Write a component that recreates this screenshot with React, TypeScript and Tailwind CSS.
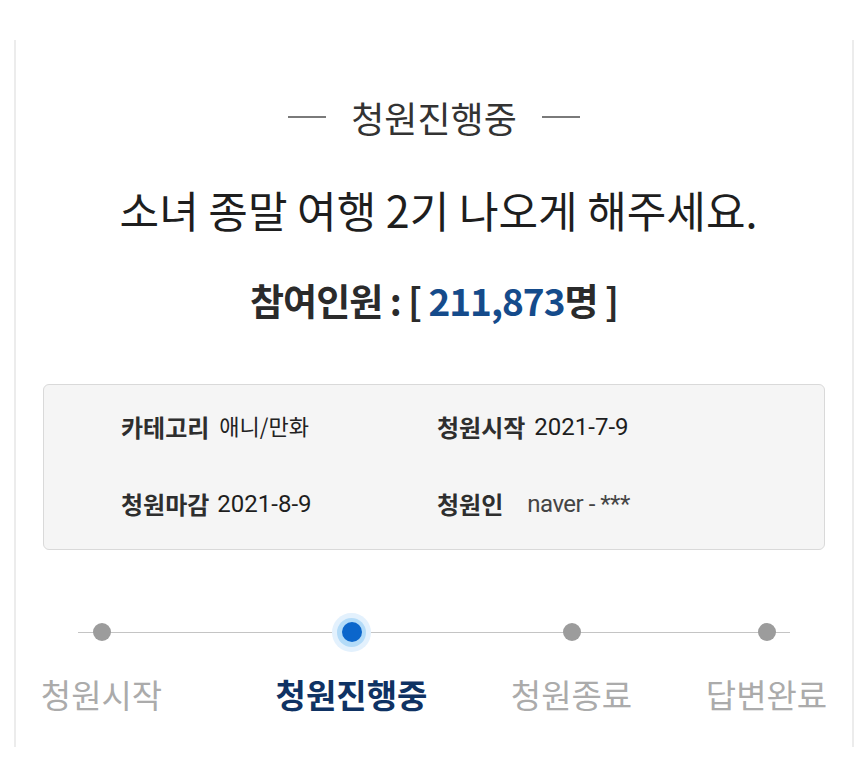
export default function App() {
  const font = "font-['Noto_Sans_CJK_KR','Noto_Sans',sans-serif]";

  return (
    <div className={`w-[866px] h-[776px] overflow-hidden bg-white ${font}`}>
      <div className="ml-[14px] mt-[40px] w-[840px] h-[707px] border-x-2 border-[#ececec] flex flex-col items-center">
        {/* status heading */}
        <div className="mt-[57px] flex items-center h-[40px]">
          <span className="block w-[38px] h-[2px] bg-[#7a7a7a]" />
          <span className="mx-[25px] text-[36px] leading-[40px] text-[#333]">청원진행중</span>
          <span className="block w-[38px] h-[2px] bg-[#7a7a7a]" />
        </div>

        <h1 className="mt-[48px] ml-[9px] text-[43px] leading-[48px] text-[#1e1e1e]">
          소녀 종말 여행 2기 나오게 해주세요.
        </h1>

        <p className="mt-[45px] text-[37px] leading-[44px] font-bold text-[#2b2b2b] tracking-[-1px]">
          참여인원 : [ <span className="text-[#154b8b]">211,873</span>명 ]
        </p>

        {/* info box */}
        <div className="mt-[62px] w-[782px] h-[166px] rounded-[6px] border border-[#d9d9d9] bg-[#f5f5f5] pl-[77px] pt-[27px]">
          <div className="grid grid-cols-[316px_1fr] gap-y-[47px]">
            <div className="flex items-center h-[30px]">
              <span className="text-[24px] font-bold text-[#2e2e2e]">카테고리</span>
              <span className="ml-[10px] text-[22px] text-[#222] -translate-y-[2px]">애니/만화</span>
            </div>
            <div className="flex items-center h-[30px]">
              <span className="text-[24px] font-bold text-[#2e2e2e]">청원시작</span>
              <span className="ml-[9px] text-[24px] text-[#1e1e1e] font-['Roboto',sans-serif]">2021-7-9</span>
            </div>
            <div className="flex items-center h-[30px]">
              <span className="text-[24px] font-bold text-[#2e2e2e]">청원마감</span>
              <span className="ml-[8px] text-[24px] text-[#1e1e1e] font-['Roboto',sans-serif]">2021-8-9</span>
            </div>
            <div className="flex items-center h-[30px]">
              <span className="text-[24px] font-bold text-[#2e2e2e]">청원인</span>
              <span className="ml-[24px] text-[24px] text-[#444] font-['Roboto',sans-serif] tracking-[-0.5px]">naver - ***</span>
            </div>
          </div>
        </div>

        {/* progress steps */}
        <div className="relative self-stretch mt-[62px] pl-[27px] flex">
          <span className="absolute left-[62px] top-[20px] w-[712px] h-px bg-[#c4c4c4]" />
          <Step label="청원시작" className="w-[117px]" />
          <Step label="청원진행중" className="ml-[118px] w-[147px]" active />
          <Step label="청원종료" className="ml-[88px] w-[117px]" />
          <Step label="답변완료" className="ml-[78px] w-[117px]" />
        </div>
      </div>
    </div>
  );
}

function Step({ label, className, active }: { label: string; className: string; active?: boolean }) {
  return (
    <div className={`relative flex flex-col items-center ${className}`}>
      <div className="h-[40px] flex items-center justify-center">
        {active ? (
          <span className="w-[39px] h-[39px] rounded-full bg-[#e3f1fd] flex items-center justify-center">
            <span className="w-[29px] h-[29px] rounded-full bg-[#b3dbf8] flex items-center justify-center">
              <span className="w-[20px] h-[20px] rounded-full bg-[#0b66cb]" />
            </span>
          </span>
        ) : (
          <span className="w-[18px] h-[18px] rounded-full bg-[#9c9c9c]" />
        )}
      </div>
      <span
        className={`mt-[22px] whitespace-nowrap text-[33px] leading-[40px] ${
          active ? 'font-bold text-[#0f3263]' : 'text-[#ababab]'
        }`}
      >
        {label}
      </span>
    </div>
  );
}
